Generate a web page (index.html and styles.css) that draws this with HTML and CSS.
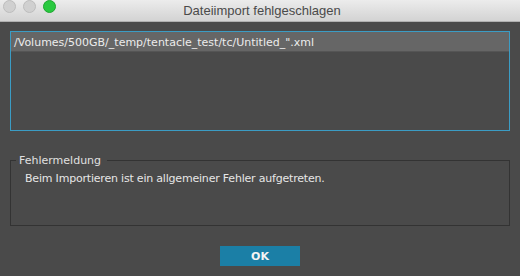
FILE: index.html
```html
<!DOCTYPE html>
<html lang="de">
<head>
    <meta charset="UTF-8">
    <meta name="viewport" content="width=device-width, initial-scale=1.0">
    <title>Dateiimport fehlgeschlagen</title>
    <link rel="stylesheet" href="styles.css">
</head>
<body>
    <div class="window">
        <div class="titlebar">
            <div class="lights">
                <span class="light"></span>
                <span class="light"></span>
                <span class="light green"></span>
            </div>
            <div class="title">Dateiimport fehlgeschlagen</div>
        </div>

        <div class="content">
            <div class="filelist">
                <div class="row selected">/Volumes/500GB/_temp/tentacle_test/tc/Untitled_".xml</div>
            </div>

            <fieldset class="errorbox">
                <legend>Fehlermeldung</legend>
                <p>Beim Importieren ist ein allgemeiner Fehler aufgetreten.</p>
            </fieldset>

            <div class="buttons">
                <button type="button" class="ok">OK</button>
            </div>
        </div>
    </div>
</body>
</html>
```

FILE: styles.css
```css
* {
    margin: 0;
    padding: 0;
    box-sizing: border-box;
}
body {
    background: #4a4a4a;
    font-family: "DejaVu Sans", sans-serif;
    width: 520px;
    height: 276px;
    overflow: hidden;
}
.window {
    display: flex;
    flex-direction: column;
    height: 276px;
}
/* Titelleiste */
.titlebar {
    height: 22px;
    background: linear-gradient(#ececec, #d3d3d3);
    border-bottom: 1px solid #b0b0b0;
    position: relative;
    display: flex;
    align-items: center;
    justify-content: center;
}
.lights {
    position: absolute;
    left: 3px;
    top: 0;
    display: flex;
    gap: 7px;
}
.light {
    width: 13px;
    height: 13px;
    border-radius: 50%;
    background: #d0d0d0;
    border: 1px solid #bdbdbd;
}
.light.green {
    background: #2ac940;
    border-color: #1ea630;
}
.title {
    font-family: "Liberation Sans", sans-serif;
    font-size: 13px;
    color: #4a4a4a;
    margin-left: 4px;
}
.content {
    padding: 9px 10px 0 10px;
    display: flex;
    flex-direction: column;
}
/* Dateiliste */
.filelist {
    height: 100px;
    border: 1px solid #3b9cc4;
    background: #4a4a4a;
}
.row {
    height: 20px;
    line-height: 21px;
    padding-left: 3px;
    font-size: 11px;
    color: #ececec;
}
.row.selected {
    background: #666666;
    border-bottom: 1px solid #555;
}
/* Fehlermeldung */
.errorbox {
    margin-top: 23px;
    height: 72px;
    border: 1px solid #333333;
    padding: 0 14px;
}
.errorbox legend {
    font-size: 11px;
    color: #e0e0e0;
    padding: 0 6px 0 3px;
    margin-left: -9px;
}
.errorbox p {
    font-size: 11px;
    color: #e6e6e6;
    margin-top: 5px;
    letter-spacing: -0.2px;
}
.buttons {
    display: flex;
    justify-content: center;
    margin-top: 20px;
}
.ok {
    width: 80px;
    height: 20px;
    background: #1b7fa6;
    border: none;
    color: #f4f4f4;
    font-family: "DejaVu Sans", sans-serif;
    font-weight: bold;
    font-size: 11px;
}
```
